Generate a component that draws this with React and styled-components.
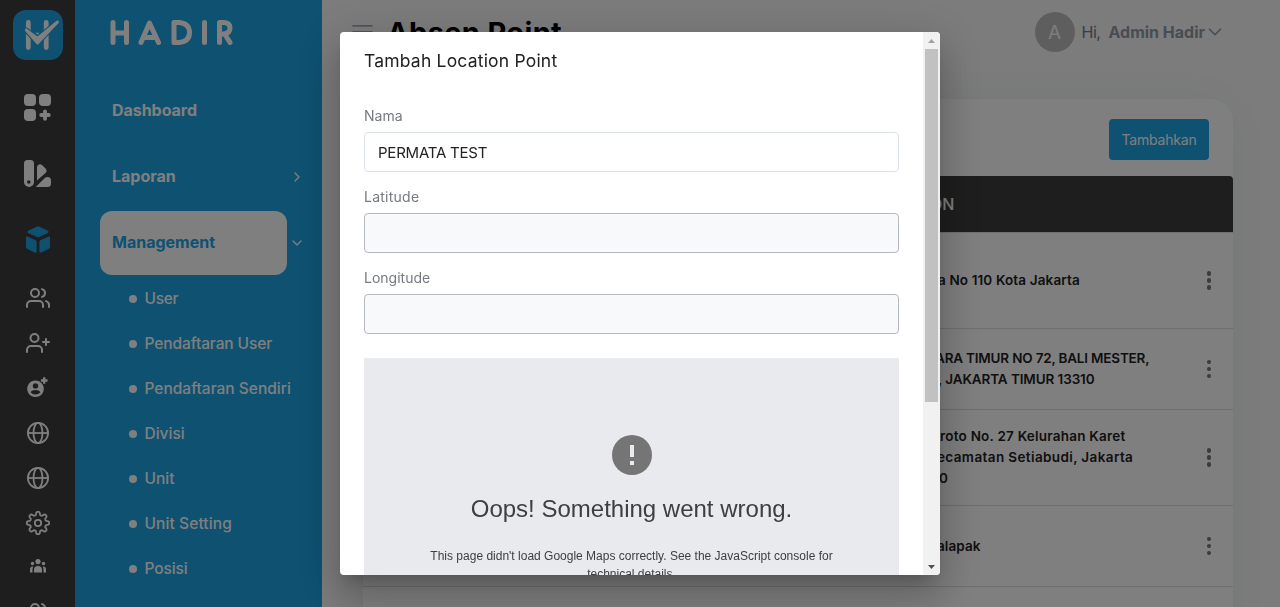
import React from 'react';
import styled, { createGlobalStyle } from 'styled-components';
import { FiUsers, FiUserPlus, FiChevronRight, FiChevronDown } from 'react-icons/fi';

const BLUE = '#1ca2e2';
const RAIL = '#3c3c3c';

const Global = createGlobalStyle`
  * { box-sizing: border-box; }
  body { margin: 0; overflow: hidden; font-family: 'Inter', 'Open Sans', sans-serif; }
`;

const Screen = styled.div`
  display: flex;
  height: 607px;
  overflow: hidden;
  background: #f9f9f9;
`;

const T = styled.span`
  display: inline-block;
  white-space: nowrap;
  font-size: ${(p) => p.$size || 14}px;
  font-weight: ${(p) => p.$weight || 400};
  letter-spacing: ${(p) => p.$track || 0}px;
  color: ${(p) => p.$color || 'inherit'};
`;

const Rail = styled.aside`
  flex: none;
  width: 75px;
  background: ${RAIL};
  color: #fff;
  display: flex;
  flex-direction: column;
  align-items: center;
  padding-top: 10px;
`;

const LogoTile = styled.div`
  width: 50px;
  height: 50px;
  border-radius: 13px;
  background: ${BLUE};
  margin-bottom: 14px;
  flex: none;
`;

const RailItem = styled.div`
  flex: none;
  width: 75px;
  height: ${(p) => p.$h}px;
  padding-top: ${(p) => (p.$main ? 1 : 0)}px;
  display: flex;
  align-items: center;
  justify-content: center;
  color: ${(p) => (p.$active ? BLUE : '#fff')};
  svg { display: block; }
`;

const Side = styled.nav`
  flex: none;
  width: 247px;
  background: ${BLUE};
  color: #fff;
  padding: 19px 0 0 25px;
`;

const Wordmark = styled.div`
  height: 59px;
  padding-left: 10px;
`;

const NavItem = styled.div`
  display: flex;
  align-items: center;
  justify-content: space-between;
  height: 66px;
  padding: 0 17px 0 12px;
  ${T} { padding-bottom: 2px; }
`;

const ActiveRow = styled.div`
  display: flex;
  align-items: center;
  gap: 2px;
  height: 66px;
`;

const ActivePill = styled.div`
  width: 187px;
  height: 64px;
  border-radius: 12px;
  background: #fff;
  color: ${BLUE};
  display: flex;
  align-items: center;
  padding: 0 0 2px 12px;
`;

const SubItem = styled.div`
  display: flex;
  align-items: center;
  gap: 7.500px;
  height: 45px;
  padding-left: 29px;
  &::before {
    content: '';
    width: 8px;
    height: 8px;
    border-radius: 50%;
    background: #fff;
  }
`;

const Main = styled.main`
  flex: 1;
  min-width: 0;
  padding: 0 47px 0 30px;
`;

const TopBar = styled.header`
  display: flex;
  align-items: center;
  height: 64px;
`;

const PageTitle = styled.h1`
  margin: 0 auto 0 13px;
  padding-top: 1px;
  font-size: 29px;
  line-height: 36px;
  font-weight: 700;
  letter-spacing: ${(p) => p.$track}px;
  color: #000;
`;

const Avatar = styled.div`
  width: 40px;
  height: 40px;
  border-radius: 50%;
  background: #bdbdbd;
  color: #fafafa;
  display: flex;
  align-items: center;
  justify-content: center;
  margin-right: 7px;
`;

const UserName = styled.div`
  display: flex;
  align-items: center;
  gap: 8px;
  color: #9298a6;
  padding-right: 7px;
  svg { margin-left: -9px; }
`;

const Card = styled.section`
  margin: 35px 0 0 11px;
  height: 560px;
  border-radius: 22px;
  background: #fff;
  box-shadow: 0 0 50px rgba(40, 60, 60, 0.06);
`;

const CardTools = styled.div`
  display: flex;
  justify-content: flex-end;
  padding: 20px 24px 16px;
`;

const AddButton = styled.button`
  width: 100px;
  height: 41px;
  border: 0;
  border-radius: 4px;
  background: ${BLUE};
  color: #fff;
  font-family: inherit;
  padding: 0;
`;

const HeadRow = styled.div`
  height: 57px;
  background: ${RAIL};
  color: #fff;
  border-bottom: 1px solid #e0e0e0;
  border-radius: 4px 4px 0 0;
  display: flex;
  align-items: center;
  padding: 0 0 1px 510px;
`;

const Row = styled.div`
  height: ${(p) => p.$h}px;
  border-bottom: 1px solid #dcdcdc;
  display: flex;
  align-items: center;
  justify-content: space-between;
  padding: 0 22px 0 495px;
  color: #212121;
`;

const Address = styled.div`
  display: flex;
  flex-direction: column;
  line-height: 21px;
  width: 290px;
`;

const AddressLine = styled.div`
  display: flex;
  height: 21px;
  margin-left: ${(p) => p.$shift || 0}px;
`;

const Dots = styled.div`
  display: flex;
  flex-direction: column;
  gap: 2.500px;
  width: 4.500px;
  i {
    width: 4.500px;
    height: 4.500px;
    border-radius: 50%;
    background: #777;
  }
`;

const Backdrop = styled.div`
  position: fixed;
  inset: 0;
  background: rgba(0, 0, 0, 0.5);
  display: flex;
  justify-content: center;
  align-items: flex-start;
  padding-top: 32px;
`;

const Dialog = styled.div`
  width: 600px;
  height: 543px;
  border-radius: 4px;
  background: #fff;
  overflow: hidden;
  display: flex;
  box-shadow: 0 11px 15px -7px rgba(0, 0, 0, 0.2), 0 24px 38px 3px rgba(0, 0, 0, 0.14), 0 9px 46px 8px rgba(0, 0, 0, 0.12);
`;

const DialogBody = styled.div`
  width: 583px;
  padding: 16px 24px 0;
  overflow: hidden;
`;

const DialogTitle = styled.div`
  height: 26px;
  display: flex;
  align-items: center;
  color: #212121;
  padding-bottom: 2px;
  margin-bottom: 31px;
`;

const Label = styled.label`
  display: block;
  height: 21px;
  line-height: 21px;
  color: #757b80;
  margin-bottom: 6px;
`;

const Input = styled.div`
  height: 40px;
  border: 1px solid ${(p) => (p.$locked ? '#b5b8bd' : '#dce1ea')};
  border-radius: 4px;
  background: ${(p) => (p.$locked ? '#f8f9fb' : '#fff')};
  color: #222;
  display: flex;
  align-items: center;
  padding-left: 13px;
  margin-bottom: 14px;
`;

const MapBox = styled.div`
  margin-top: 24px;
  height: 400px;
  background: #e8eaed;
  padding-top: 77px;
  display: flex;
  flex-direction: column;
  align-items: center;
  font-family: 'Liberation Sans', Arial, sans-serif;
  color: #3c4043;
  text-align: center;
  svg { display: block; flex: none; }
`;

const MapTitle = styled.div`
  font-size: 24px;
  line-height: 28px;
  margin-top: 20px;
`;

const MapText = styled.div`
  font-size: 12px;
  line-height: 18px;
  margin-top: 24px;
  width: 428px;
`;

const ScrollBar = styled.div`
  width: 17px;
  background: #f1f1f1;
  display: flex;
  flex-direction: column;
  align-items: center;
  justify-content: space-between;
`;

const Arrow = styled.div`
  height: 17px;
  display: flex;
  align-items: center;
  svg { display: block; }
`;

const Thumb = styled.div`
  width: 13px;
  height: 353px;
  background: #c1c1c1;
  margin-bottom: auto;
`;

const CHECK = 'M13.300 20L24.500 28.500L44.500 12L24.600 33Z';

const Logo = () => (
  <svg width="50" height="50" viewBox="0 0 50 50" fill="none" strokeLinecap="round">
    <path d="M15.300 12.500V37.500M33.200 12.500V37.500" stroke="#fff" strokeWidth="4.800" />
    <path d={CHECK} fill={BLUE} stroke={BLUE} strokeWidth="5" strokeLinejoin="round" />
    <path d={CHECK} fill="#fff" stroke="#fff" strokeWidth="3" strokeLinejoin="round" />
    <path d="M22.300 22.800h4.400l-2.200 2z" fill="#fff" />
  </svg>
);

const MenuLines = () => (
  <svg width="22" height="20" viewBox="0 0 22 20" fill="none" stroke="#9fa8bc" strokeWidth="1.700" strokeLinecap="round">
    <path d="M1 3.800h19M1 9.800h19M1 15.800h19" />
  </svg>
);

const GridPlus = () => (
  <svg width="27" height="27" viewBox="0.5 0.5 27 27" fill="currentColor">
    <rect x="0.5" y="0.5" width="12" height="12" rx="4" />
    <rect x="15.5" y="0.5" width="12" height="12" rx="4" />
    <rect x="0.5" y="15.5" width="12" height="12" rx="4" />
    <path d="M21.500 17.800v7.500M17.700 21.500h7.600" stroke="currentColor" strokeWidth="3.800" strokeLinecap="round" />
  </svg>
);

const Swatch = () => (
  <svg width="27" height="27" viewBox="0.5 0.5 27 27" fill="currentColor">
    <path fillRule="evenodd" d="M4 .5h3a3.500 3.500 0 0 1 3.500 3.500V22.500a5 5 0 0 1-10 0V4A3.500 3.500 0 0 1 4 .5ZM5.300 20.700a1.800 1.800 0 1 0 0 3.600a1.800 1.800 0 0 0 0-3.600Z" />
    <path d="M13.500 21V7.500a3 3 0 0 1 5-2l3.500 3.500a3.200 3.200 0 0 1 0 4.500Z" />
    <path d="M12.300 27.500L21.500 18.300a4 4 0 0 1 2.500-.8a3.500 3.500 0 0 1 3.500 3.500v3a3.500 3.500 0 0 1-3.500 3.500Z" />
  </svg>
);

const Cube = () => (
  <svg width="26" height="27" viewBox="0 0.5 26 27" fill="currentColor" stroke="currentColor" strokeWidth="1.600" strokeLinejoin="round">
    <path d="M13 1.500L22.500 6Q23 6.300 22.500 6.700L13 11L3.500 6.700Q3 6.300 3.500 6Z" />
    <path d="M1.800 12.300Q1.800 11.500 2.500 11.900L10.300 15.500Q10.800 15.800 10.800 16.400V26Q10.800 26.600 10 26.300L2.500 22.500Q1.800 22.100 1.800 21.300Z" />
    <path d="M24.200 12.300Q24.200 11.500 23.500 11.900L15.700 15.500Q15.200 15.800 15.200 16.400V26Q15.200 26.600 16 26.300L23.500 22.500Q24.200 22.100 24.200 21.300Z" />
  </svg>
);

const UserBadge = () => (
  <svg width="22" height="22" viewBox="0 0 22 22" fill="currentColor">
    <path fillRule="evenodd" d="M8.500 4.500a8.300 8.300 0 1 0 .01 0ZM8.500 7.200a2.700 2.700 0 1 1 0 5.400a2.700 2.700 0 0 1 0-5.400ZM8.500 14c2.300 0 4 .9 4.900 2.200a6.200 6.200 0 0 1-9.800 0C4.500 14.900 6.200 14 8.500 14Z" />
    <path d="M17.200 1v7M13.700 4.500h7" stroke={RAIL} strokeWidth="4.400" />
    <path d="M17.200 1.200v6.600M13.900 4.500h6.600" stroke="currentColor" strokeWidth="2.300" />
  </svg>
);

const Globe = () => (
  <svg width="24" height="24" viewBox="0 0 24 24" fill="none" stroke="currentColor" strokeWidth="1.800">
    <circle cx="12" cy="12" r="10.100" />
    <ellipse cx="12" cy="12" rx="4.500" ry="10.100" />
    <path d="M1.900 12h20.200" />
  </svg>
);

const gear = (() => {
  const pts = [];
  for (let i = 0; i <= 160; i += 1) {
    const a = (i / 160) * Math.PI * 2;
    const r = 9.600 + 1.600 * Math.tanh(2 * Math.cos(8 * a));
    pts.push(`${(12 + r * Math.sin(a)).toFixed(2)} ${(12 - r * Math.cos(a)).toFixed(2)}`);
  }
  return `M${pts.join('L')}Z`;
})();

const Gear = () => (
  <svg width="24" height="24" viewBox="0 0 24 24" fill="none" stroke="currentColor" strokeWidth="1.800" strokeLinejoin="round">
    <path d={gear} />
    <circle cx="12" cy="12" r="3.200" />
  </svg>
);

const Group = () => (
  <svg width="18" height="16" viewBox="0 0 18 16" fill="currentColor">
    <circle cx="9" cy="3.600" r="2.600" />
    <circle cx="3.500" cy="5.500" r="1.700" />
    <circle cx="14.500" cy="5.500" r="1.700" />
    <path d="M5 14.500V11.500a4 3.500 0 0 1 8 0v3Z" />
    <path d="M1 14.500V11a2.500 2.500 0 0 1 3.300-2.300A5 5 0 0 0 3.500 11.500v3ZM17 14.500V11a2.500 2.500 0 0 0-3.300-2.300a5 5 0 0 1 .8 2.800v3Z" />
  </svg>
);

const HadirMark = () => (
  <svg width="124" height="28" viewBox="0 0 124 28" fill="none" stroke="#fff" strokeWidth="5" strokeLinecap="round" strokeLinejoin="round">
    <path d="M3 3.500V23.500M16.500 3.500V23.500M3 14H16.500" />
    <path d="M31 23.500L39.500 4L48.500 23.500M35 18.500H45" />
    <path d="M64 3.500V23.500H69Q79.500 22.500 79.500 13.500T69 3.500Z" />
    <path d="M94.500 3.500V23.500" />
    <path d="M109.500 23.500V3.500H114Q120 4 120 9T114 15H110M115 15.500L120 23.500" />
  </svg>
);

const subItems = [
  ['User', -0.3],
  ['Pendaftaran User', -0.1],
  ['Pendaftaran Sendiri', 0],
  ['Divisi', 0],
  ['Unit', 0],
  ['Unit Setting', 0.1],
  ['Posisi', -0.1],
];

const rows = [
  { h: 96, lines: [['a No 110 Kota Jakarta', 4, 0.13]] },
  { h: 81, lines: [['ARA TIMUR NO 72, BALI MESTER,', 1, -0.19], [', JAKARTA TIMUR 13310', 4, -0.1]] },
  { h: 96, lines: [['roto No. 27 Kelurahan Karet', 6, 0.22], ['ecamatan Setiabudi, Jakarta', 3, 0.38], ['0', 5, 0]] },
  { h: 81, lines: [['alapak', 3, 0.1]] },
];

const fields = [
  { label: 'Nama', track: 0, value: 'PERMATA TEST' },
  { label: 'Latitude', track: 0.25, locked: true },
  { label: 'Longitude', track: 0, locked: true },
];

export default function App() {
  return (
    <>
      <Global />
      <Screen>
        <Rail>
          <LogoTile><Logo /></LogoTile>
          <RailItem $h={66} $main><GridPlus /></RailItem>
          <RailItem $h={66} $main><Swatch /></RailItem>
          <RailItem $h={66} $main $active><Cube /></RailItem>
          <RailItem $h={52}><FiUsers size={24} /></RailItem>
          <RailItem $h={38}><FiUserPlus size={24} /></RailItem>
          <RailItem $h={50}><UserBadge /></RailItem>
          <RailItem $h={42}><Globe /></RailItem>
          <RailItem $h={48}><Globe /></RailItem>
          <RailItem $h={42}><Gear /></RailItem>
          <RailItem $h={44}><Group /></RailItem>
          <RailItem $h={50}><FiUsers size={24} /></RailItem>
        </Rail>
        <Side>
          <Wordmark><HadirMark /></Wordmark>
          <NavItem><T $size={16} $weight={700} $track={-0.04}>Dashboard</T></NavItem>
          <NavItem>
            <T $size={16} $weight={700}>Laporan</T>
            <FiChevronRight size={16} />
          </NavItem>
          <ActiveRow>
            <ActivePill><T $size={16} $weight={700}>Management</T></ActivePill>
            <FiChevronDown size={16} />
          </ActiveRow>
          {subItems.map(([name, track]) => (
            <SubItem key={name}><T $size={15.500} $weight={500} $track={track}>{name}</T></SubItem>
          ))}
        </Side>
        <Main>
          <TopBar>
            <MenuLines />
            <PageTitle $track={0.35}>Absen Point</PageTitle>
            <Avatar><T $size={19}>A</T></Avatar>
            <UserName>
              <T $size={16} $color="#74788d" $track={-0.5}>Hi,</T>
              <T $size={16} $weight={700}>Admin Hadir</T>
              <FiChevronDown size={22} strokeWidth={1.800} />
            </UserName>
          </TopBar>
          <Card>
            <CardTools><AddButton><T $size={14} $track={-0.2}>Tambahkan</T></AddButton></CardTools>
            <HeadRow><T $size={16} $weight={500}>LOCATION</T></HeadRow>
            {rows.map((row) => (
              <Row key={row.lines[0][0]} $h={row.h}>
                <Address>
                  {row.lines.map(([text, shift, track]) => (
                    <AddressLine key={text} $shift={shift + 76}>
                      <T $size={13.500} $weight={600} $track={track}>{text}</T>
                    </AddressLine>
                  ))}
                </Address>
                <Dots><i /><i /><i /></Dots>
              </Row>
            ))}
          </Card>
        </Main>
      </Screen>
      <Backdrop>
        <Dialog>
          <DialogBody>
            <DialogTitle><T $size={17.500} $track={0.2}>Tambah Location Point</T></DialogTitle>
            {fields.map((f) => (
              <React.Fragment key={f.label}>
                <Label><T $size={14} $track={f.track}>{f.label}</T></Label>
                <Input $locked={f.locked}>{f.value && <T $size={15} $track={-0.22}>{f.value}</T>}</Input>
              </React.Fragment>
            ))}
            <MapBox>
              <svg width="40" height="40" viewBox="0 0 40 40">
                <circle cx="20" cy="20" r="20" fill="#757575" />
                <path d="M18 10h4v12h-4zM18 26h4v4h-4z" fill="#e8eaed" />
              </svg>
              <MapTitle>Oops! Something went wrong.</MapTitle>
              <MapText>This page didn't load Google Maps correctly. See the JavaScript console for technical details.</MapText>
            </MapBox>
          </DialogBody>
          <ScrollBar>
            <Arrow><svg width="7" height="4" viewBox="0 0 7 4"><path d="M0 4L3.500 0L7 4Z" fill="#a3a3a3" /></svg></Arrow>
            <Thumb />
            <Arrow><svg width="7" height="4" viewBox="0 0 7 4"><path d="M0 0L3.500 4L7 0Z" fill="#505050" /></svg></Arrow>
          </ScrollBar>
        </Dialog>
      </Backdrop>
    </>
  );
}
